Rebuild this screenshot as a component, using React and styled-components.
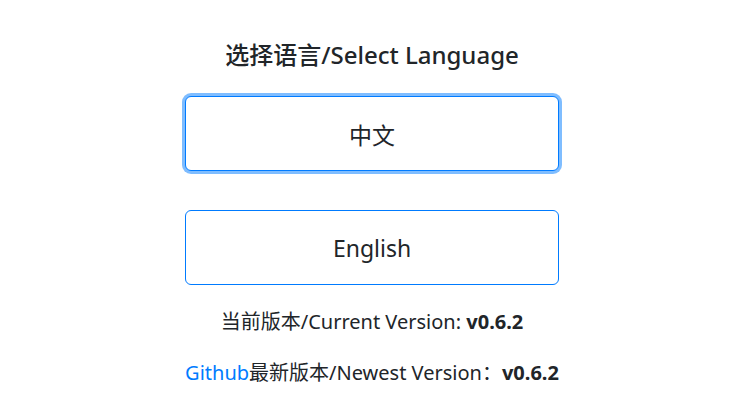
import React from "react";
import styled, { createGlobalStyle } from "styled-components";

const GlobalStyle = createGlobalStyle`
  body {
    margin: 0;
    background: #fff;
    color: #212529;
    font-family: "Noto Sans", "Noto Sans CJK SC", sans-serif;
  }
`;

const Page = styled.div`
  display: flex;
  flex-direction: column;
  align-items: center;
  padding-top: 38px;
`;

const Title = styled.h4`
  margin: 0 0 24px;
  font-size: 24px;
  font-weight: 500;
  line-height: 34px;
`;

const LangButton = styled.button`
  width: 374px;
  height: 75px;
  margin-bottom: ${(p) => p.gap || 0}px;
  background: #fff;
  color: #212529;
  font-family: inherit;
  font-size: 23px;
  border: 1px solid #007bff;
  border-radius: 6px;
  box-shadow: ${(p) => (p.focused ? "0 0 0 3px rgba(0,123,255,.5)" : "none")};
  cursor: pointer;
`;

const Info = styled.p`
  margin: ${(p) => p.top || 0}px 0 0;
  font-size: 20px;
  line-height: 28px;
`;

const Link = styled.a`
  color: #007bff;
  text-decoration: none;
`;

export default function App() {
  return (
    <>
      <GlobalStyle />
      <Page>
        <Title>选择语言/Select Language</Title>
        <LangButton focused gap={39}>中文</LangButton>
        <LangButton gap={0}>English</LangButton>
        <Info top={23}>
          当前版本/Current Version: <b>v0.6.2</b>
        </Info>
        <Info top={23}>
          <Link href="#">Github</Link>最新版本/Newest Version：<b>v0.6.2</b>
        </Info>
      </Page>
    </>
  );
}
